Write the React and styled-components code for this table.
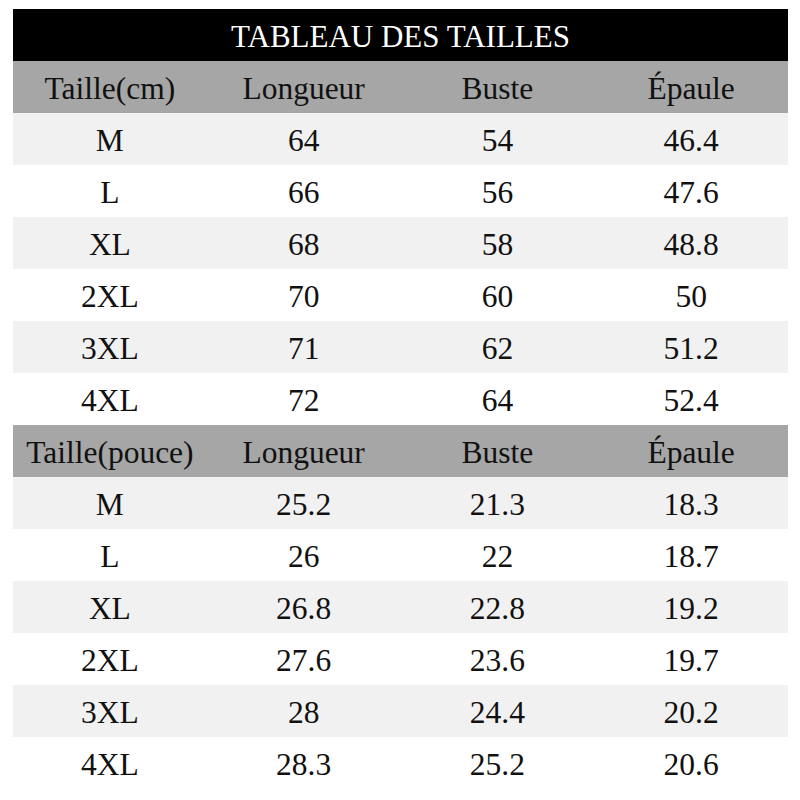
import React from "react";
import styled, { createGlobalStyle } from "styled-components";

const GlobalStyle = createGlobalStyle`
  html, body {
    margin: 0;
    padding: 0;
    background: #ffffff;
  }
  body {
    font-family: "Liberation Serif", "Times New Roman", serif;
    color: #111111;
  }
`;

const Page = styled.div`
  width: 800px;
  height: 800px;
  padding: 9px 12px 0 13px;
  box-sizing: border-box;
`;

const Table = styled.div`
  display: flex;
  flex-direction: column;
  width: 775px;
  font-family: "Liberation Serif", "Times New Roman", serif;
`;

const Title = styled.div`
  height: 52px;
  background: #000000;
  color: #ffffff;
  font-size: 31px;
  display: flex;
  align-items: center;
  justify-content: center;
  padding-top: 4px;
  box-sizing: border-box;
`;

const Row = styled.div`
  display: grid;
  grid-template-columns: repeat(4, 1fr);
  height: 52px;
  background: ${(p) =>
    p.$head ? "#a6a6a6" : p.$shaded ? "#f1f1f1" : "#ffffff"};
`;

const Cell = styled.div`
  display: flex;
  align-items: center;
  justify-content: center;
  font-size: 31.5px;
  padding-top: 3px;
  color: #111111;
`;

const heads = ["Longueur", "Buste", "Épaule"];
const sizes = ["M", "L", "XL", "2XL", "3XL", "4XL"];

const cm = [
  ["64", "54", "46.4"],
  ["66", "56", "47.6"],
  ["68", "58", "48.8"],
  ["70", "60", "50"],
  ["71", "62", "51.2"],
  ["72", "64", "52.4"],
];

const inch = [
  ["25.2", "21.3", "18.3"],
  ["26", "22", "18.7"],
  ["26.8", "22.8", "19.2"],
  ["27.6", "23.6", "19.7"],
  ["28", "24.4", "20.2"],
  ["28.3", "25.2", "20.6"],
];

const Section = ({ label, data }) => (
  <>
    <Row $head>
      <Cell>{label}</Cell>
      {heads.map((h) => (
        <Cell key={h}>{h}</Cell>
      ))}
    </Row>
    {data.map((vals, i) => (
      <Row key={sizes[i]} $shaded={i % 2 === 0}>
        <Cell>{sizes[i]}</Cell>
        {vals.map((v, j) => (
          <Cell key={j}>{v}</Cell>
        ))}
      </Row>
    ))}
  </>
);

export default function App() {
  return (
    <Page>
      <GlobalStyle />
      <Table>
        <Title>TABLEAU DES TAILLES</Title>
        <Section label="Taille(cm)" data={cm} />
        <Section label="Taille(pouce)" data={inch} />
      </Table>
    </Page>
  );
}
